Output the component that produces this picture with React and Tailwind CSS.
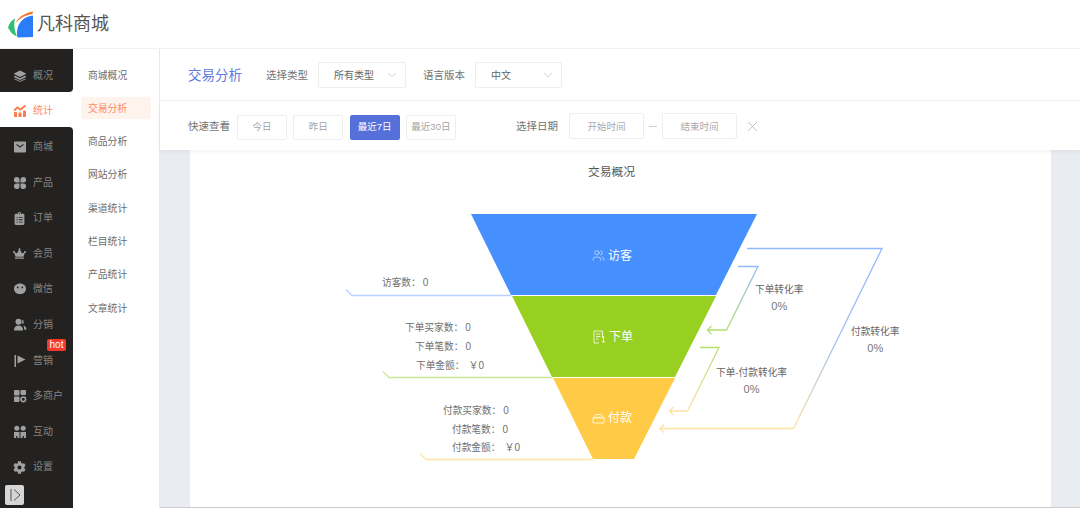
import { ChevronDown, X, Users } from "lucide-react";
import { FaClipboardList, FaCrown, FaCog } from "react-icons/fa";

const LayersIcon = () => (
    <svg width="14" height="14" viewBox="0 0 14 14" fill="currentColor">
        <path d="M7 1.500 13.500 4.800 7 8 .5 4.800Z" />
        <path d="M2.200 6.800 7 9.200l4.800-2.400 1.700.9L7 11 .5 7.700Z" />
        <path d="M2.200 9.600 7 12l4.800-2.400 1.200.7L7 13 1 10.300Z" opacity="0.8" />
    </svg>
);
const ChartIcon = () => (
    <svg width="14" height="14" viewBox="0 0 14 14" fill="currentColor">
        <rect x="1" y="8" width="3" height="5" rx="0.5" />
        <rect x="5.500" y="8.500" width="3" height="4.500" rx="0.5" />
        <rect x="10" y="6.500" width="3" height="6.500" rx="0.5" />
        <path d="M1 6.500 4.500 3.500l3 2L12.500 1.500" fill="none" stroke="currentColor" strokeWidth="2" />
    </svg>
);
const ShopIcon = () => (
    <svg width="14" height="14" viewBox="0 0 14 14" fill="currentColor">
        <path d="M2 1.500h10a1 1 0 0 1 1 1v9a1 1 0 0 1-1 1H2a1 1 0 0 1-1-1v-9a1 1 0 0 1 1-1Zm1.500 2.200L7 6.200l3.500-2.500v1.400L7 7.800 3.500 5.100Z" fillRule="evenodd" />
    </svg>
);
const CloverIcon = () => (
    <svg width="14" height="14" viewBox="0 0 14 14" fill="currentColor">
        <path d="M6.500 6.500H3.500a2.800 2.800 0 1 1 3-3Z" />
        <path d="M7.500 6.500V3.500a2.800 2.800 0 1 1 3 3Z" />
        <path d="M6.500 7.500V10.500a2.800 2.800 0 1 1-3-3Z" />
        <path d="M7.500 7.500H10.500a2.800 2.800 0 1 1-3 3Z" />
    </svg>
);
const FaceIcon = () => (
    <svg width="14" height="14" viewBox="0 0 14 14" fill="currentColor">
        <path d="M7 1.500c3.600 0 6 2.300 6 5.200s-2.400 5.300-6 5.300c-3.600 0-6-2.400-6-5.300S3.400 1.500 7 1.500Zm-2.300 3a.9.900 0 1 0 0 1.800.9.900 0 0 0 0-1.800Zm4.600 0a.9.900 0 1 0 0 1.800.9.900 0 0 0 0-1.800Z" fillRule="evenodd" />
    </svg>
);
const ShareIcon = () => (
    <svg width="14" height="14" viewBox="0 0 14 14" fill="currentColor">
        <circle cx="5.500" cy="3.800" r="3" />
        <path d="M1 12.500c0-3.200 1.800-5 4.500-5s4.500 1.800 4.500 5Z" />
        <path d="M9.200 1.500a2.600 2.600 0 0 1 0 4.800ZM10.500 7.500c1.700.5 3 2 3 4.300H11.200c0-1.700-.2-3-.7-4.300Z" />
    </svg>
);
const FlagIcon = () => (
    <svg width="14" height="14" viewBox="0 0 14 14" fill="currentColor">
        <rect x="1.500" y="1" width="1.500" height="12" />
        <path d="M4.500 1.500 12.500 5.500 4.500 9.500Z" />
    </svg>
);
const StoreIcon = () => (
    <svg width="14" height="14" viewBox="0 0 14 14" fill="currentColor">
        <rect x="1" y="1" width="5.500" height="5.500" rx="1" />
        <rect x="7.500" y="1" width="5.500" height="5" rx="1" />
        <rect x="1" y="7.500" width="5.500" height="5.500" rx="1" />
        <circle cx="10.300" cy="10.300" r="2.300" fill="none" stroke="currentColor" strokeWidth="1.600" />
    </svg>
);
const PeopleIcon = () => (
    <svg width="14" height="14" viewBox="0 0 14 14" fill="currentColor">
        <circle cx="3.800" cy="3.200" r="2.500" />
        <circle cx="10.200" cy="3.200" r="2.500" />
        <path d="M1 7h5.500v6H4.500V11H3.200v2H1ZM7.500 7H13v6h-2V11H9.700v2H7.500Z" />
    </svg>
);
const ToggleIcon = () => (
    <svg width="14" height="14" viewBox="0 0 14 14" fill="none" stroke="#555" strokeWidth="1">
        <path d="M3 1v12M6 1.500 12 7l-6 5.500" />
    </svg>
);
const PayIcon = () => (
    <svg width="13" height="11" viewBox="0 0 13 11" fill="none" stroke="currentColor" strokeWidth="0.800">
        <path d="M1 5h11v5H1ZM1 5l3-3.500h5L12 5M3 5c1-1 6-1 7 0" />
    </svg>
);
const OrderIcon = () => (
    <svg width="13" height="14" viewBox="0 0 13 14" fill="none" stroke="currentColor" strokeWidth="0.800">
        <path d="M9.500 8V1H1v12h5M3 4h4.500M3 6.500h4.500M3 9h2.500M10.500 6v6.500M8.800 11l1.700 1.700L12.200 11" />
    </svg>
);

const topItems = [{ label: "概况", icon: <LayersIcon /> }];
const bottomItems = [
    { label: "商城", icon: <ShopIcon /> },
    { label: "产品", icon: <CloverIcon /> },
    { label: "订单", icon: <FaClipboardList size={13} /> },
    { label: "会员", icon: <FaCrown size={13} /> },
    { label: "微信", icon: <FaceIcon /> },
    { label: "分销", icon: <ShareIcon /> },
    { label: "营销", icon: <FlagIcon />, hot: true },
    { label: "多商户", icon: <StoreIcon /> },
    { label: "互动", icon: <PeopleIcon /> },
    { label: "设置", icon: <FaCog size={13} /> },
];
const subItems = ["商城概况", "交易分析", "商品分析", "网站分析", "渠道统计", "栏目统计", "产品统计", "文章统计"];

const NavItem = ({ item }) => (
    <div className="relative flex h-[35.6px] items-center pt-[4px] text-[#858585]">
        <span className="flex w-[33px] justify-center pl-[6px] text-[#a0a0a0]">{item.icon}</span>
        <span className="text-[10px] leading-none">{item.label}</span>
        {item.hot && (
            <span className="absolute left-[47px] top-[-2px] flex h-[12px] w-[19px] items-center justify-center rounded-[2px] bg-[#f5392f] text-[10px] leading-none text-white">hot</span>
        )}
    </div>
);

const Sidebar = () => (
    <aside className="flex w-[73px] shrink-0 flex-col bg-white">
        <div className="rounded-br-[4px] bg-[#232220] pt-[7px]">
            {topItems.map((item) => <NavItem key={item.label} item={item} />)}
        </div>
        <div className="flex h-[35.6px] items-center pt-[3px] text-[#ff8a5c]">
            <span className="flex w-[33px] justify-center pl-[6px] text-[#ff7d4d]"><ChartIcon /></span>
            <span className="text-[10px] leading-none">统计</span>
        </div>
        <div className="flex flex-1 flex-col rounded-tr-[4px] bg-[#232220]">
            {bottomItems.map((item) => <NavItem key={item.label} item={item} />)}
            <button className="ml-[5px] mt-[2px] flex h-[20px] w-[19px] items-center justify-center rounded-[2px] bg-[#d6d6d6]">
                <ToggleIcon />
            </button>
        </div>
    </aside>
);

const SubMenu = () => (
    <div className="flex w-[87px] shrink-0 flex-col border-r border-[#e8e8e8] bg-white px-[8px] pt-[15px]">
        {subItems.map((label) => (
            <div
                key={label}
                className={`mb-[11.300px] flex h-[22px] items-center rounded-[3px] px-[7px] pt-[1px] text-[9.800px] leading-none ${label === "交易分析" ? "bg-[#fff3ee] text-[#ff8a5c]" : "text-[#6b6b6b]"}`}
            >
                {label}
            </div>
        ))}
    </div>
);

const SelectBox = ({ value, width }) => (
    <div className={`flex h-[26px] items-center justify-between rounded-[2px] border border-[#eeeeee] pl-[15px] pr-[6px] text-[10px] text-[#666666] ${width}`}>
        <span className="pt-[2px]">{value}</span>
        <ChevronDown size={14} strokeWidth={1} className="text-[#aaaaaa]" />
    </div>
);

const QuickBtn = ({ label, active }) => (
    <div className={`flex h-[25px] w-[50px] items-center justify-center rounded-[2px] border text-[9.500px] ${active ? "border-[#5570d8] bg-[#5570d8] text-white" : "border-[#eeeeee] text-[#a3a3a3]"}`}>
        {label}
    </div>
);

const DateBox = ({ label }) => (
    <div className="mb-[2px] flex h-[26px] w-[75px] items-center justify-center rounded-[2px] border border-[#eeeeee] pt-[2px] text-[9.500px] text-[#aaaaaa]">{label}</div>
);

const Filters = () => (
    <>
        <div className="flex h-[52px] items-center border-b border-[#eef0f4] bg-white pl-[28px]">
            <span className="w-[78px] pt-[3px] text-[13.500px] text-[#6079dc]">交易分析</span>
            <span className="mr-[10px] pt-[2px] text-[10.500px] text-[#737373]">选择类型</span>
            <SelectBox value="所有类型" width="w-[88px]" />
            <span className="ml-[17px] mr-[10px] pt-[2px] text-[10.500px] text-[#737373]">语言版本</span>
            <SelectBox value="中文" width="w-[87px]" />
        </div>
        <div className="z-10 flex h-[49px] items-center bg-white pl-[28px] pt-[3px] shadow-[0_2px_5px_rgba(0,0,0,0.05)]">
            <span className="mr-[7px] text-[10.500px] text-[#737373]">快速查看</span>
            <div className="flex gap-[6.300px]">
                <QuickBtn label="今日" />
                <QuickBtn label="昨日" />
                <QuickBtn label="最近7日" active />
                <QuickBtn label="最近30日" />
            </div>
            <span className="ml-[60px] mr-[11px] text-[10.500px] text-[#737373]">选择日期</span>
            <DateBox label="开始时间" />
            <span className="mx-[5px] mb-[2px] h-px w-[8px] bg-[#cccccc]" />
            <DateBox label="结束时间" />
            <X size={17} strokeWidth={1} className="mb-[2px] ml-[7px] text-[#aaaaaa]" />
        </div>
    </>
);

const Stat = ({ className, label, value, money }) => (
    <div className={`absolute flex whitespace-nowrap text-[9.700px] leading-none text-[#707070] ${className}`}>
        <span>{label}：</span>
        <span className={`text-[10px] ${money ? "ml-[4px]" : "ml-[2px]"}`}>{value}</span>
    </div>
);

const Rate = ({ className, label }) => (
    <div className={`absolute flex flex-col items-center gap-[6px] whitespace-nowrap text-[9.700px] leading-none text-[#666666] ${className}`}>
        <span>{label}</span>
        <span className="text-[11px] text-[#777777]">0%</span>
    </div>
);

const Funnel = () => (
    <svg width="861" height="307" viewBox="190 200 861 307" fill="none" strokeWidth="1.300" className="block">
        <defs>
            <linearGradient id="blueGreen" gradientUnits="userSpaceOnUse" x1="0" y1="266" x2="0" y2="330">
                <stop offset="0" stopColor="#8fb9ff" />
                <stop offset="1" stopColor="#b5de70" />
            </linearGradient>
            <linearGradient id="greenYellow" gradientUnits="userSpaceOnUse" x1="0" y1="347" x2="0" y2="411">
                <stop offset="0" stopColor="#b5de70" />
                <stop offset="1" stopColor="#fde3a0" />
            </linearGradient>
            <linearGradient id="blueYellow" gradientUnits="userSpaceOnUse" x1="0" y1="248" x2="0" y2="428">
                <stop offset="0" stopColor="#8fb9ff" />
                <stop offset="0.5" stopColor="#a0c0f5" />
                <stop offset="1" stopColor="#fde3a0" />
            </linearGradient>
        </defs>
        <path d="M471 214H757L716 295H511Z" fill="#458fff" />
        <path d="M512 296H716L675 377H552Z" fill="#97d020" />
        <path d="M553 378H675L634 459H593Z" fill="#ffcb47" />
        <path d="M346 289.500 352 295.500H511" stroke="#b5d2ff" />
        <path d="M383 371.500 389 377.500H552" stroke="#cbe695" />
        <path d="M420 453.500 426 459.500H593" stroke="#ffe4a6" />
        <path d="M747 248.500H882L793.500 428.500H660M664 424.500 660 428.500 664 432.500" stroke="url(#blueYellow)" />
        <path d="M738 266.500H758L726.500 330H707.500M711.500 326 707.500 330 711.500 334" stroke="url(#blueGreen)" />
        <path d="M700 347.500H719L687.500 411H669.500M673.500 407 669.500 411 673.500 415" stroke="url(#greenYellow)" />
    </svg>
);

const Chart = () => (
    <div className="ml-[30px] mr-[29px] flex flex-1 flex-col bg-white">
        <div className="h-[50px] pr-[18px] pt-[14px] text-center text-[11.800px] text-[#555555]">交易概况</div>
        <div className="relative">
            <Funnel />
            <div className="absolute left-[402px] top-[49px] flex items-center gap-[3px] text-[12px] leading-none text-white">
                <Users size={13} strokeWidth={1} />访客
            </div>
            <div className="absolute left-[403px] top-[130px] flex items-center gap-[3px] text-[12px] leading-none text-white">
                <OrderIcon />下单
            </div>
            <div className="absolute left-[402px] top-[212px] flex items-center gap-[3px] text-[12px] leading-none text-white">
                <PayIcon />付款
            </div>
            <Stat className="left-[192px] top-[78px]" label="访客数" value="0" />
            <Stat className="left-[215px] top-[123px]" label="下单买家数" value="0" />
            <Stat className="left-[225px] top-[142px]" label="下单笔数" value="0" />
            <Stat className="left-[226px] top-[161px]" label="下单金额" value="￥0" money />
            <Stat className="left-[253px] top-[206px]" label="付款买家数" value="0" />
            <Stat className="left-[262px] top-[225px]" label="付款笔数" value="0" />
            <Stat className="left-[262px] top-[243px]" label="付款金额" value="￥0" money />
            <Rate className="left-[565px] top-[85px]" label="下单转化率" />
            <Rate className="left-[526px] top-[168px]" label="下单-付款转化率" />
            <Rate className="left-[661px] top-[127px]" label="付款转化率" />
        </div>
    </div>
);

export default function App() {
    return (
        <div className="flex h-[508px] w-[1080px] flex-col overflow-hidden bg-white font-['Liberation_Sans','Noto_Sans_CJK_SC',sans-serif]">
            <header className="flex h-[49px] shrink-0 items-center border-b border-[#f2f2f2] bg-white pl-[8px]">
                <svg width="26" height="27" viewBox="0 0 26 27">
                    <path d="M0 16.500C1.500 12 3.500 9.500 7 7.500 5.500 13 6.500 20 9 25.500 5 24 2 21 0 16.500Z" fill="#2fbf71" />
                    <path d="M7.500 12C10 6.500 17 1.500 25 .5L24.500 3C17.500 4 12 7 7.500 12Z" fill="#f47a32" />
                    <path d="M9.500 26.500C8 19 10 12.500 15.500 8 18 6 21 5 25 4.500L25 26Z" fill="#2a7df6" />
                </svg>
                <span className="ml-[3px] text-[18px] leading-none text-[#555555]">凡科商城</span>
            </header>
            <div className="flex min-h-0 flex-1">
                <Sidebar />
                <SubMenu />
                <main className="flex min-w-0 flex-1 flex-col border-b border-[#cccccc] bg-[#e9edf2]">
                    <Filters />
                    <Chart />
                </main>
            </div>
        </div>
    );
}
